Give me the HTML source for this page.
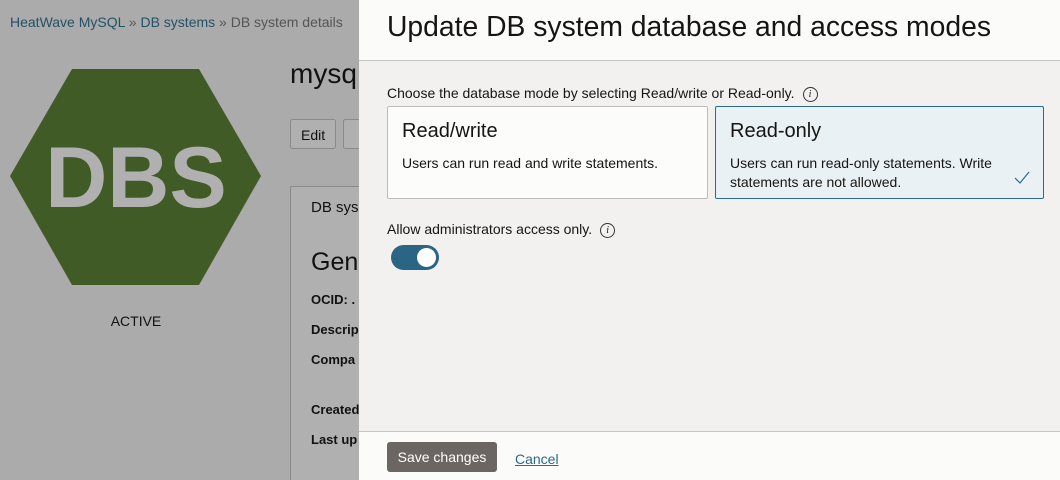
<!DOCTYPE html>
<html><head><style>
*{box-sizing:border-box;margin:0;padding:0}
body{width:1060px;height:480px;overflow:hidden;position:relative;font-family:"Liberation Sans",sans-serif;background:#acacac;}
.bg{position:absolute;left:0;top:0;width:359px;height:480px;background:#ababab;}
.t{position:absolute;white-space:nowrap;}
.panel{position:absolute;left:359px;top:0;width:701px;height:480px;background:#f2f1f0;}
.hdr{position:absolute;left:0;top:0;width:701px;height:61px;background:#fbfbfa;border-bottom:1px solid #c7c6c4;}
.ftr{position:absolute;left:0;top:431px;width:701px;height:49px;background:#fbfbfa;border-top:1px solid #c7c6c4;}
.card{position:absolute;top:106px;height:93px;border:1px solid #bdbcba;border-radius:2px;background:#fcfcfb;}
.card h3{position:absolute;left:14px;top:13px;font-size:20px;font-weight:normal;color:#161513;}
.card p{position:absolute;left:14px;top:47px;font-size:14px;line-height:19px;color:#161513;}
.info{display:inline-block;width:15px;height:15px;border:1px solid #333;border-radius:50%;font-size:10px;font-style:italic;text-align:center;line-height:13px;font-family:"Liberation Serif",serif;vertical-align:1px;margin-left:8px;}
</style></head><body>
<div class="bg"></div>
<div class="t" style="left:10px;top:14px;font-size:14px;color:#555;"><span style="color:#225267">HeatWave MySQL</span> » <span style="color:#225267">DB systems</span> » DB system details</div>
<svg style="position:absolute;left:0;top:0" width="360" height="480">
<polygon points="10,176 72,69 199,69 261,176 199,285 72,285" fill="#415b26"/>
<text x="136" y="207" text-anchor="middle" font-family="Liberation Sans" font-weight="bold" font-size="86" fill="#b0b0b0">DBS</text>
<text x="136" y="326" text-anchor="middle" font-family="Liberation Sans" font-size="14" fill="#111">ACTIVE</text>
<text x="290" y="83" font-family="Liberation Sans" font-size="28" fill="#111">mysq</text>
<rect x="290.5" y="119.5" width="45" height="29" rx="2" fill="#b0b0b0" stroke="#8a8a8a"/>
<text x="301" y="140" font-family="Liberation Sans" font-size="14" fill="#111">Edit</text>
<rect x="343.5" y="119.5" width="30" height="29" rx="2" fill="#b0b0b0" stroke="#8a8a8a"/>
<rect x="290.5" y="186.5" width="80" height="300" fill="#b0b0b0" stroke="#8a8a8a"/>
<text x="311" y="212" font-family="Liberation Sans" font-size="15" fill="#111">DB sys</text>
<text x="311" y="270" font-family="Liberation Sans" font-size="25" fill="#111">Gene</text>
<g font-family="Liberation Sans" font-size="13" font-weight="bold" fill="#111">
<text x="311" y="304">OCID: .</text><text x="311" y="334">Descrip</text><text x="311" y="364">Compa</text><text x="311" y="414">Created</text><text x="311" y="444">Last up</text></g>
</svg>
<div class="panel">
<div class="hdr"><div class="t" style="left:28px;top:10px;font-size:28.3px;color:#161513;">Update DB system database and access modes</div></div>
<div class="t" style="left:28px;top:85px;font-size:14px;color:#161513;">Choose the database mode by selecting Read/write or Read-only.<span class="info">i</span></div>
<div class="card" style="left:28px;width:321px;"><h3>Read/write</h3><p>Users can run read and write statements.</p></div>
<div class="card" style="left:356px;width:329px;background:#e9f1f4;border-color:#2a6a8c;"><h3>Read-only</h3><p>Users can run read-only statements. Write<br>statements are not allowed.</p>
<svg style="position:absolute;left:298px;top:64px" width="16" height="14"><path d="M1 7 L6 12 L15 1" fill="none" stroke="#2a6a8c" stroke-width="1.2"/></svg></div>
<div class="t" style="left:28px;top:221px;font-size:14px;color:#161513;">Allow administrators access only.<span class="info">i</span></div>
<div style="position:absolute;left:32px;top:245px;width:48px;height:25px;border-radius:13px;background:#2b6585;"><div style="position:absolute;right:3px;top:3px;width:19px;height:19px;border-radius:50%;background:#fff;"></div></div>
<div class="ftr">
<div style="position:absolute;left:28px;top:10px;width:110px;height:30px;border-radius:3px;background:#6b6661;color:#fff;font-size:14px;text-align:center;line-height:30px;">Save changes</div>
<div class="t" style="left:156px;top:19px;font-size:14px;color:#2a6a8c;text-decoration:underline;">Cancel</div>
</div>
</div>
</body></html>
